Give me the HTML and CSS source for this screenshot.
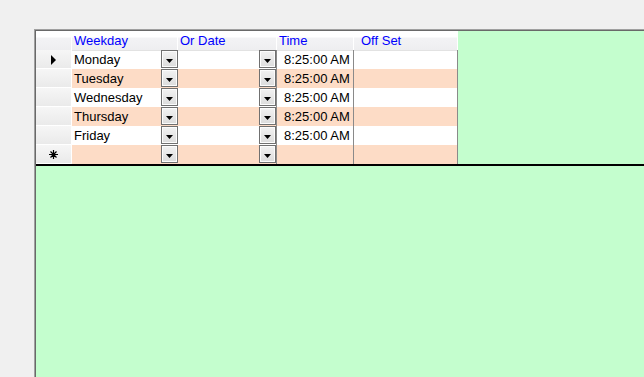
FILE: index.html
```html
<!doctype html>
<html lang="en">
    <head>
        <meta charset="UTF-8" />
        <meta name="viewport" content="width=device-width, initial-scale=1.0" />
        <title>Schedule</title>
        <link rel="stylesheet" href="styles.css">
    </head>

    <body>
        <div class="frame">
            <div class="top">
                <div class="grid">
                    <div class="row head">
                        <div class="cell corner"></div>
                        <div class="cell">Weekday</div>
                        <div class="cell">Or Date</div>
                        <div class="cell">Time</div>
                        <div class="cell offset">Off Set</div>
                    </div>
                    <div class="row">
                        <div class="cell rowhead">
                            <svg class="current" width="6" height="10" viewBox="0 0 6 10"><polygon points="0,0 5,5 0,10" /></svg>
                        </div>
                        <div class="cell combo">Monday<span class="drop"></span></div>
                        <div class="cell combo line"><span class="drop"></span></div>
                        <div class="cell line time">8:25:00 AM</div>
                        <div class="cell line"></div>
                    </div>
                    <div class="row alt">
                        <div class="cell rowhead"></div>
                        <div class="cell combo">Tuesday<span class="drop"></span></div>
                        <div class="cell combo line"><span class="drop"></span></div>
                        <div class="cell line time">8:25:00 AM</div>
                        <div class="cell line"></div>
                    </div>
                    <div class="row">
                        <div class="cell rowhead"></div>
                        <div class="cell combo">Wednesday<span class="drop"></span></div>
                        <div class="cell combo line"><span class="drop"></span></div>
                        <div class="cell line time">8:25:00 AM</div>
                        <div class="cell line"></div>
                    </div>
                    <div class="row alt">
                        <div class="cell rowhead"></div>
                        <div class="cell combo">Thursday<span class="drop"></span></div>
                        <div class="cell combo line"><span class="drop"></span></div>
                        <div class="cell line time">8:25:00 AM</div>
                        <div class="cell line"></div>
                    </div>
                    <div class="row">
                        <div class="cell rowhead"></div>
                        <div class="cell combo">Friday<span class="drop"></span></div>
                        <div class="cell combo line"><span class="drop"></span></div>
                        <div class="cell line time">8:25:00 AM</div>
                        <div class="cell line"></div>
                    </div>
                    <div class="row alt">
                        <div class="cell rowhead">
                            <svg class="newrow" width="9" height="9" viewBox="0 0 9 9">
                                <path d="M4.5 0V9M0 4.5H9M1.5 1.5L7.5 7.5M7.5 1.5L1.5 7.5" />
                            </svg>
                        </div>
                        <div class="cell combo"><span class="drop"></span></div>
                        <div class="cell combo line"><span class="drop"></span></div>
                        <div class="cell line time"></div>
                        <div class="cell line"></div>
                    </div>
                </div>
            </div>
        </div>
    </body>
</html>
```

FILE: styles.css
```css
body {
    margin: 0;
    height: 100vh;
    overflow: hidden;
    background: #f0f0f0;
    font-family: "Liberation Sans", Arial, sans-serif;
    font-size: 13px;
}

.frame {
    margin: 29px 0 0 34px;
    height: calc(100vh - 29px);
    padding: 1px 0 0 1px;
    border-top: 1px solid #a0a0a0;
    border-left: 1px solid #a0a0a0;
    box-shadow: inset 1px 1px 0 #696969;
    background: #c4fece;
    box-sizing: border-box;
}

.top {
    display: flex;
    height: 133px;
    border-bottom: 2px solid #000;
}

.grid {
    width: 422px;
    background: #fff;
}

.row {
    display: grid;
    grid-template-columns: 36px 106px 99px 77px 104px;
    height: 19px;
}

.alt {
    background: #fddcc6;
}

.cell {
    position: relative;
    box-sizing: border-box;
    padding-left: 2px;
    line-height: 19px;
    white-space: nowrap;
    color: #000;
}

.line {
    border-right: 1px solid #8a8a8a;
}

.time {
    padding-left: 7px;
}

.head {
    background: linear-gradient(#fff 0, #fff 6px, #f3f3f5 7px, #eeeef0 100%);
}

.head .cell {
    color: #0000ff;
    border-right: 1px solid #fff;
    border-bottom: 1px solid #e2e2e2;
}

.head .offset {
    padding-left: 7px;
}

.rowhead {
    background: linear-gradient(#f6f6f6, #eaeaea);
    border-bottom: 1px solid #fff;
    border-right: 1px solid #fff;
}

.current {
    position: absolute;
    left: 15px;
    top: 5px;
    fill: #000;
}

.newrow {
    position: absolute;
    left: 13px;
    top: 5px;
    stroke: #000;
    stroke-width: 1.2;
}

.drop {
    position: absolute;
    right: 0;
    top: 0;
    width: 17px;
    height: 18px;
    box-sizing: border-box;
    border: 1px solid #707070;
    background: linear-gradient(#f2f2f2, #dcdcdc);
    box-shadow: inset 0 0 0 1px #fcfcfc;
}

.drop::after {
    content: "";
    position: absolute;
    left: 4px;
    top: 8px;
    width: 7px;
    height: 4px;
    background: #000;
    clip-path: polygon(0 0, 100% 0, 50% 100%);
}
```
